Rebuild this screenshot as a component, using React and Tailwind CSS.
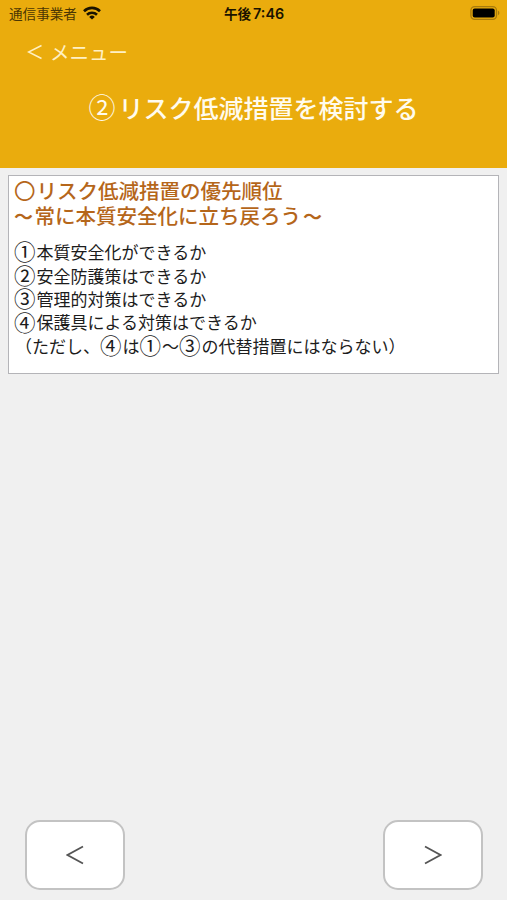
const headings = [
  { mark: "〇", text: "リスク低減措置の優先順位" },
  { wave: "〜", text: "常に本質安全化に立ち戻ろう" },
];

const items = [
  { mark: "①", text: "本質安全化ができるか" },
  { mark: "②", text: "安全防護策はできるか" },
  { mark: "③", text: "管理的対策はできるか" },
  { mark: "④", text: "保護具による対策はできるか" },
];

function Mark({ children }) {
  return (
    <span className="inline-block w-[22.5px] pb-px text-[21.5px] leading-none font-normal">{children}</span>
  );
}

function WifiIcon() {
  return (
    <svg viewBox="0 0 18 14" className="-mt-[2px] h-[14px] w-[18px]" fill="none" stroke="#1a1300" strokeWidth="2.6">
      <path d="M1 5.2a11.4 11.4 0 0 1 16 0" />
      <path d="M4 8.7a7.2 7.2 0 0 1 10 0" />
      <path d="M9 13.6 6.2 10.9a4 4 0 0 1 5.6 0z" fill="#1a1300" stroke="none" />
    </svg>
  );
}

function BatteryIcon() {
  return (
    <svg viewBox="0 0 30 14" className="-mt-[2px] h-[14px] w-[30px]">
      <rect x="0.9" y="0.7" width="25.6" height="12.6" rx="3.8" fill="none" stroke="#a87b0c" strokeWidth="1.3" />
      <rect x="2.7" y="2.5" width="22" height="9" rx="2" fill="#000" />
      <path d="M28 4.8c1.8.6 1.8 3.8 0 4.4z" fill="#a87b0c" />
    </svg>
  );
}

function StatusBar() {
  return (
    <div className="grid h-[28px] grid-cols-3 items-center pr-[7px] pl-[9px] text-[13.6px] leading-none text-[#4a3603]">
      <div className="flex items-center gap-[6px] whitespace-nowrap">
        <span>通信事業者</span>
        <WifiIcon />
      </div>
      <div className="-ml-px text-center font-bold whitespace-nowrap text-[#1a1300]">
        午後<span className="ml-[2px] font-['Inter'] text-[14.3px] font-semibold">7:46</span>
      </div>
      <div className="flex justify-end">
        <BatteryIcon />
      </div>
    </div>
  );
}

function NavButton({ label, children }) {
  return (
    <button
      type="button"
      aria-label={label}
      className="flex h-[70px] w-[100px] items-center justify-center rounded-[15px] border-2 border-[#c3c3c3] bg-white"
    >
      <svg viewBox="0 0 18 20" className="h-5 w-[18px]" fill="none" stroke="#555" strokeWidth="1.8">
        {children}
      </svg>
    </button>
  );
}

function App() {
  return (
    <div className="flex h-screen w-full flex-col overflow-hidden bg-[#f0f0f0] font-['Noto_Sans_CJK_JP',sans-serif]">
      <header className="h-[168px] bg-[#eaac0d]">
        <StatusBar />
        <a className="flex h-[48px] items-center gap-[8px] pl-[27px] text-[19.5px] leading-none font-normal text-[#fff0c4]">
          <svg viewBox="0 0 15 16" className="h-4 w-[15px]" fill="none" stroke="currentColor" strokeWidth="1.5">
            <path d="M14.5 1.5 1.5 8l13 6.5" />
          </svg>
          メニュー
        </a>
        <h1 className="mt-[13px] flex items-center justify-center text-[25px] leading-[36px] font-medium text-[#fffbee]">
          <span className="w-[30px] text-[27px] font-normal">②</span>
          リスク低減措置を検討する
        </h1>
      </header>

      <main className="mx-2 mt-[7px] h-[199px] border border-[#b4b4b8] bg-white pt-[2px] pl-[5px]">
        <h2 className="text-[20.5px] font-medium text-[#b5661a]">
          {headings.map((line) => (
            <span key={line.text} className="flex h-[25px] items-center leading-none whitespace-nowrap">
              {line.mark ? <Mark>{line.mark}</Mark> : null}
              {line.wave ? <span className="w-[20.5px] text-[19px] font-bold">{line.wave}</span> : null}
              {line.text}
              {line.wave ? <span className="pl-[2px] text-[19px] font-bold">{line.wave}</span> : null}
            </span>
          ))}
        </h2>
        <ul className="mt-[12px] text-[17px] text-[#1c1c1c]">
          {items.map((item) => (
            <li key={item.mark} className="flex h-[23.4px] items-center leading-none whitespace-nowrap">
              <Mark>{item.mark}</Mark>
              {item.text}
            </li>
          ))}
          <li className="flex h-[23.4px] items-center pl-px leading-none whitespace-nowrap">
            （ただし、<Mark>④</Mark>は<Mark>①</Mark>〜<Mark>③</Mark>の代替措置にはならない）
          </li>
        </ul>
      </main>

      <footer className="mt-auto flex justify-between pr-6 pb-[10px] pl-[25px]">
        <NavButton label="前へ">
          <path d="M17 1.5 1.5 10 17 18.5" />
        </NavButton>
        <NavButton label="次へ">
          <path d="M1 1.5 16.5 10 1 18.5" />
        </NavButton>
      </footer>
    </div>
  );
}

export default App;
